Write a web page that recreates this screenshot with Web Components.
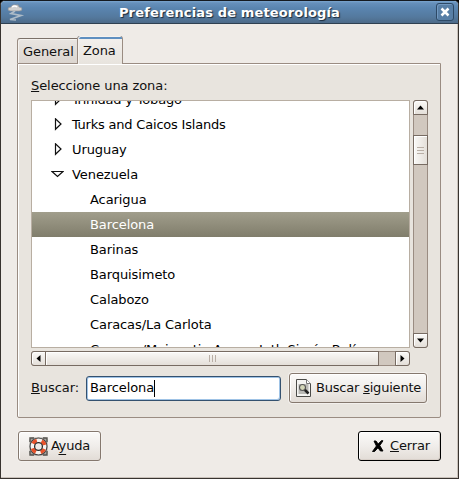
<!DOCTYPE html>
<html lang="es"><head><meta charset="utf-8"><title>Preferencias de meteorología</title>
<style>
html,body{margin:0;padding:0}
body{width:459px;height:479px;overflow:hidden;font:13px/16px "DejaVu Sans",sans-serif;letter-spacing:-.08px;color:#111;background:#000}
u{text-decoration-thickness:1px;text-underline-offset:1px;text-decoration-skip-ink:none}
.low{text-underline-offset:4px}
.k{letter-spacing:-2.4px}
.tight{letter-spacing:-.2px}
</style></head><body>
<pref-window>
  <tab-pane>
    <zone-list>
      <zone-row kind="closed"><span class="tight"><span class="k">T</span>rinidad y <span class="k">T</span>obago</span></zone-row>
      <zone-row kind="closed"><span class="tight"><span class="k">T</span>urks and Caicos Islands</span></zone-row>
      <zone-row kind="closed">Uruguay</zone-row>
      <zone-row kind="open">Venezuela</zone-row>
      <zone-row>Acarigua</zone-row>
      <zone-row selected>Barcelona</zone-row>
      <zone-row>Barinas</zone-row>
      <zone-row>Barquisimeto</zone-row>
      <zone-row>Calabozo</zone-row>
      <zone-row>Caracas/La Carlota</zone-row>
      <zone-row>Caracas/Maiquetia Aerop. Intl. Simón Bolívar</zone-row>
    </zone-list>
    <search-row slot="search"></search-row>
  </tab-pane>
  <gtk-button slot="actions" style="width:83px;--pad:10px;--gap:3px">
    <svg slot="icon" width="19" height="19" viewBox="0 0 19 19"><rect x=".5" y=".5" width="18" height="18" rx="3" fill="#aaa7a1"/><path d="M1 5V1h4M14 1h4v4M18 14v4h-4M5 18H1v-4" fill="none" stroke="#55534f" stroke-width="1.4"/><circle cx="9.500" cy="9.500" r="8.500" fill="#f6f4f1" stroke="#444" stroke-width="1.100"/><circle cx="9.500" cy="9.500" r="6.200" fill="none" stroke="#e8522a" stroke-width="3.800" stroke-dasharray="4.700 5.039" stroke-dashoffset="-2.520"/><circle cx="9.500" cy="9.500" r="3.900" fill="#efebe7" stroke="#2e2c2a" stroke-width="1.300"/></svg><span style="letter-spacing:-1.4px">A</span><u class="low">y</u><span class="tight">uda</span></gtk-button>
  <gtk-button slot="actions" default style="width:83px;--pad:12px;--gap:5px;letter-spacing:-.15px">
    <svg slot="icon" width="14" height="14" viewBox="0 0 14 14"><path d="M3 2h2l2.2 3L10.5 1.6 12 1.8 8.8 6.6 12 12h-2.6L7 8.8 3.6 12.5H1.5L5.4 7z" fill="#000" stroke="#000" stroke-width=".9"/></svg><u>C</u>errar</gtk-button>
</pref-window>
<script>
const element=(name,html)=>customElements.define(name,class extends HTMLElement{
  constructor(){super();this.attachShadow({mode:'open'}).innerHTML='<style>*{box-sizing:border-box}u{text-decoration-thickness:1px;text-underline-offset:1px;text-decoration-skip-ink:none}</style>'+html}
});

element('pref-window',`<style>
:host{display:flex;flex-direction:column;box-sizing:border-box;width:459px;height:479px;border:1px solid #38332f;border-top-color:#151a20;border-radius:5px 5px 0 0;background:#efebe7;overflow:hidden;box-shadow:inset -1px -1px #c9c1ba}
header{height:23px;flex:none;display:grid;grid-template-columns:30px 1fr 30px;align-items:center;background:linear-gradient(#7aa5cf 0,#6690bb 2px,#5a85b0 7px,#54799e 16px,#4d6a89);border-bottom:1px solid #2f4051}
h1{margin:0;font:bold 13px/16px "DejaVu Sans",sans-serif;letter-spacing:.14px;color:#fff;text-align:center;text-shadow:1px 1px 1px #1b2a3a;white-space:nowrap;padding-top:1px}
.logo{margin:1px 0 0 5px;display:block}
button{width:18px;height:18px;border:1px solid #2d4966;border-radius:3px;background:#587fa6;box-shadow:inset 1px 1px #7299c1;padding:0;justify-self:end;margin-right:4px;display:grid;place-items:center}
main{padding:12px 17px 0 16px}
footer{display:flex;justify-content:space-between;padding:13px 17px 0}
</style>
<header><svg class="logo" width="20" height="20" viewBox="0 0 20 20"><path d="M5 8q-3 0-3-2 0-2 3-2Q6 1 10 2q3-1 3 2 3 0 3 2t-3 2z" fill="#cfcfce" stroke="#8f9193" stroke-width=".7"/><path d="M6 4q3-2 5 0" stroke="#fff" fill="none" stroke-width="1.5"/><path d="M9 8 5 10.500l10 2-11 4 6 .5" fill="none" stroke="#aebcc8" stroke-width="1.700"/></svg><h1>Preferencias de meteorología</h1>
<button aria-label="Cerrar ventana"><svg width="10" height="10" viewBox="0 0 10 10"><path d="M1.500 1.500l7 7M8.500 1.500l-7 7" stroke="#fff" stroke-width="2.500"/></svg></button></header>
<main><slot></slot></main><footer><slot name="actions"></slot></footer>`);

element('tab-pane',`<style>
:host{display:block}
nav{display:flex;align-items:flex-end;height:27px}
.tab{width:60px;height:25px;border:1px solid #9a8c82;border-right:0;border-bottom:0;border-radius:3px 0 0 0;background:linear-gradient(#e9e5e1,#dcd6d0);box-shadow:inset 1px 1px #f5f2ef;padding:5px 0 0 5px;border-top-color:#7c7169}
.on{width:46px;height:28px;margin-bottom:-1px;border:1px solid #9a8c82;border-top:0;border-bottom:0;border-radius:3px 3px 0 0;background:linear-gradient(#3f6287 0 1px,#5f8fc0 1px 3px,#f2efec 3px,#e8e4de);padding:7px 0 0 5px;position:relative}
section{height:355px;border:1px solid #9a8c82;background:#e8e4de;box-shadow:inset 1px 1px #fff;padding:14px 13px 0;border-radius:0 0 2px 2px}
label{display:block;height:22px}
</style><nav><div class="tab">General</div><div class="tab on">Zona</div></nav>
<section><label><u>S</u>eleccione una zona:</label><slot></slot><slot name="search"></slot></section>`);

element('zone-list',`<style>
:host{display:grid;grid-template-columns:379px 15px;column-gap:3px;row-gap:3px;grid-template-rows:248px 15px}
.view{border:1px solid #b8aea2;background:#fff;overflow:hidden;white-space:nowrap}
.rows{margin-top:-14px;width:377px}
</style><div class="view"><div class="rows"><slot></slot></div></div><scroll-bar vertical></scroll-bar><scroll-bar></scroll-bar>`);

element('zone-row',`<style>
:host{display:flex;height:25px;align-items:center;padding-left:58px;color:#000}
:host([kind]){padding-left:19px}
:host([selected]){background:linear-gradient(#a19e8c,#807d6b);color:#fff}
svg{display:none;width:13px;height:13px;margin-right:8px;flex:none;fill:#fff;stroke:#111;stroke-width:1.2}
:host([kind=closed]) .closed,:host([kind=open]) .open{display:block}
</style><svg class="closed"><path d="M4.500 .8v10.500L10 6z"/></svg><svg class="open"><path d="M1 3.500h11L6.500 8.500z"/></svg><slot></slot>`);

element('scroll-bar',`<style>
:host{display:flex;background:#d1c8bf;border:1px solid #9a8c82;box-sizing:border-box;border-radius:3px}
:host([vertical]){flex-direction:column}
.end,.thumb{border:1px solid #776b62;margin:-1px;background:linear-gradient(#faf9f7,#e4dfd9);box-shadow:inset 1px 1px #fff;display:flex;align-items:center;justify-content:center;flex:none}
.end{width:15px;height:15px}.s{border-radius:3px 0 0 3px}.e{border-radius:0 3px 3px 0;margin-left:auto}
.thumb{width:334px;margin-left:0}
:host([vertical]) .s{border-radius:3px 3px 0 0}
:host([vertical]) .e{border-radius:0 0 3px 3px;margin:auto -1px -1px}
:host([vertical]) .thumb{width:15px;height:30px;margin:21px -1px 0;background:linear-gradient(90deg,#faf9f7,#e4dfd9)}
i{width:7px;height:7px;background:repeating-linear-gradient(90deg,#b9afa6 0 1px,transparent 1px 3px)}
:host([vertical]) i{background:repeating-linear-gradient(#b9afa6 0 1px,transparent 1px 3px)}
svg{width:7px;height:7px;fill:#000}
.s svg{transform:rotate(180deg)}
:host([vertical]) .s svg{transform:rotate(-90deg)}:host([vertical]) .e svg{transform:rotate(90deg)}
</style><div class="end s"><svg viewBox="0 0 7 7"><path d="M1.500 0v7L5.500 3.500z"/></svg></div><div class="thumb"><i></i></div><div class="end e"><svg viewBox="0 0 7 7"><path d="M1.500 0v7L5.500 3.500z"/></svg></div>`);

element('gtk-button',`<style>
:host{display:flex;align-items:center;box-sizing:border-box;height:30px;border:1px solid #85786e;border-radius:3px;background:linear-gradient(#fbfaf9,#f0edea 50%,#e2dcd6);box-shadow:inset 1px 1px #fff,0 0 0 1px #f3f0ed;padding-left:var(--pad);gap:var(--gap);white-space:nowrap}
:host([default]){border-color:#000;box-shadow:inset 1px 1px #fff,inset -1px -1px #d8d0c9}
::slotted(svg){flex:none}
</style><slot name="icon"></slot><span><slot></slot></span>`);

element('search-row',`<style>
:host{display:flex;height:30px;margin-top:7px;align-items:center;width:396px}
label{width:55px;flex:none}
.entry{width:195px;height:25px;border:1px solid #34516f;border-radius:3px;background:#fff;box-shadow:inset 0 1px #9fc3e6,inset 1px 0 #9fc3e6,inset -1px -1px #9fc3e6;display:flex;align-items:center;padding-left:3px;margin-right:8px;color:#000}
.entry:after{content:"";width:1px;height:17px;background:#000}
gtk-button{width:138px;--pad:4px;--gap:3px;letter-spacing:-.2px}
</style><label><u>B</u>uscar:</label><div class="entry">Barcelona</div><gtk-button><svg slot="icon" width="19" height="20" viewBox="0 0 19 20"><path d="M2.500 1.500h10l4 4v13h-14z" fill="#f4f4f2" stroke="#4b4b48"/><path d="M12.500 1.500v4h4" fill="#fff" stroke="#777"/><path d="M4.500 6h10v10h-10z" fill="#b9b9b5"/><path d="m10 11 4.500 4.500" stroke="#222" stroke-width="2.500"/><circle cx="8.500" cy="9.500" r="3" fill="#d3d6b8" stroke="#555" stroke-width="1.100"/></svg>Buscar <u>s</u>iguiente</gtk-button>`);
</script></body></html>
